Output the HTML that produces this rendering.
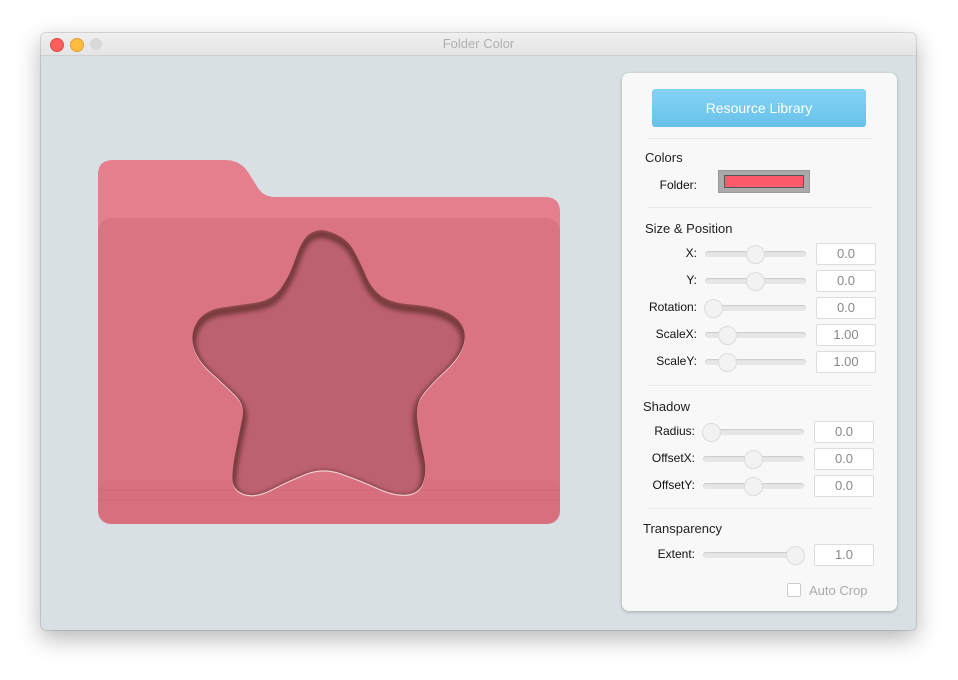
<!DOCTYPE html><html><head><style>
body{margin:0;width:958px;height:680px;background:#fff;font-family:"Liberation Sans",sans-serif;position:relative;overflow:hidden}
.a{position:absolute}
.win{left:41px;top:33px;width:875px;height:597px;border-radius:5px;box-shadow:0 8px 24px rgba(0,0,0,.3),0 0 0 1px rgba(0,0,0,.12);background:#d8e0e3;overflow:hidden}
.tb{left:0;top:0;width:875px;height:22px;background:linear-gradient(#f0f0f0,#e4e4e4);border-bottom:1px solid #cfcfcf;text-align:center;font-size:13px;color:#b0b0b0;line-height:22px}
.dot{top:5px;width:12px;height:12px;border-radius:50%}
.panel{left:622px;top:73px;width:275px;height:538px;background:#f8f8f8;border-radius:7px;box-shadow:0 1px 3px rgba(0,0,0,.25)}
.h{font-size:13px;color:#222}
.l{font-size:12px;color:#111;text-align:right;width:80px}
.tr{height:6px;border-radius:3px;background:#e6e6e6;box-shadow:inset 0 1px 1px rgba(0,0,0,.12)}
.th{width:17px;height:17px;border-radius:50%;background:#f2f2f2;box-shadow:0 0 0 1px #dcdcdc,0 1px 1px rgba(0,0,0,.1)}
.f{width:58px;height:20px;border:1px solid #ddd;background:#fff;border-radius:2px;font-size:13px;color:#888;text-align:center;line-height:20px}
.sep{height:1px;background:#e8e8e8;left:648px;width:224px}
</style></head><body>
<div class="a win">
<div class="a tb">Folder Color</div>
<div class="a dot" style="left:9px;background:#fc605c;border:0.5px solid #de4a45"></div>
<div class="a dot" style="left:29px;background:#fdbc40;border:0.5px solid #dea033"></div>
<div class="a dot" style="left:49px;background:#d8d8d8"></div>
</div>
<svg class="a" style="left:0;top:0" width="958" height="680">
<defs>
<path id="st" d="M336.5 234.5 Q348 240 354 251 Q360 262 366 276 Q372 290 382 296.5 Q392 303 411 304.5 Q430 306 442.5 310.5 Q455 315 461 324 Q467 333 463.5 345 Q460 357 445 371 Q430 385 422.5 395 Q415 405 417.5 422.5 Q420 440 423.5 455 Q427 470 423.5 481.5 Q420 493 407.5 494.5 Q395 496 377.5 488 Q360 480 341.5 473.5 Q323 467 306.5 473.5 Q290 480 272.5 489 Q255 498 244 494 Q233 490 232.5 480 Q232 470 236 450 Q240 430 242.5 417.5 Q245 405 235 395 Q225 385 211 372.5 Q197 360 193.5 346.5 Q190 333 197.5 321.5 Q205 310 222.5 307.5 Q240 305 256.5 302.5 Q273 300 281.5 287.5 Q290 275 295 260 Q300 245 305 238.5 Q310 232 317.5 230.5 Q325 229 336.5 234.5 Z"/>
<clipPath id="cp"><use href="#st"/></clipPath>
<filter id="bl"><feGaussianBlur stdDeviation="2"/></filter>
</defs>
<path d="M98 175 Q98 160 113 160 L225 160 Q240 160 248 172 L258 188 Q264 197 275 197 L545 197 Q560 197 560 212 L560 300 L98 300 Z" fill="#e57f8e"/>
<rect x="98" y="218" width="462" height="306" rx="14" fill="#da7382"/>
<rect x="98" y="480" width="462" height="44" rx="12" fill="#d56c7b" opacity=".6"/>
<line x1="98" y1="490" x2="560" y2="490" stroke="#cf6676" opacity=".6"/>
<line x1="98" y1="500" x2="560" y2="500" stroke="#cf6676" opacity=".6"/>
<use href="#st" fill="#f4d0d4" transform="translate(0,1.2)"/>
<use href="#st" fill="#bc6170"/>
<g clip-path="url(#cp)"><use href="#st" fill="none" stroke="#5a2a26" stroke-width="8" transform="translate(0,4)" opacity=".7" filter="url(#bl)"/></g>
</svg>
<div class="a panel"></div>
<div class="a" style="left:652px;top:89px;width:214px;height:38px;border-radius:3px;background:linear-gradient(#85d3f5,#68c1ea);color:#fff;font-size:14px;text-align:center;line-height:38px">Resource Library</div>
<div class="a sep" style="top:138px"></div>
<div class="a h" style="left:645px;top:150px">Colors</div>
<div class="a l" style="left:617px;top:178px">Folder:</div>
<div class="a" style="left:718px;top:170px;width:90px;height:21px;background:#aaa;border:1px solid #999"><div class="a" style="left:5px;top:4px;width:78px;height:11px;background:#fd5a6b;border:1px solid #555"></div></div>
<div class="a sep" style="top:207px"></div>
<div class="a h" style="left:645px;top:221px">Size &amp; Position</div>
<div class="a sep" style="top:385px"></div>
<div class="a h" style="left:643px;top:399px">Shadow</div>
<div class="a sep" style="top:508px"></div>
<div class="a h" style="left:643px;top:521px">Transparency</div>
<div id="rows"></div>
<div class="a" style="left:787px;top:583px;width:12px;height:12px;border:1px solid #ccc;border-radius:2px;background:#fff"></div>
<div class="a" style="left:809px;top:583px;font-size:13px;color:#aaa">Auto Crop</div>
<script>
var R=[["X:",254,705,816,.5,"0.0"],["Y:",281,705,816,.5,"0.0"],["Rotation:",308,705,816,0,"0.0"],["ScaleX:",335,705,816,.17,"1.00"],["ScaleY:",362,705,816,.17,"1.00"],["Radius:",432,703,814,0,"0.0"],["OffsetX:",459,703,814,.5,"0.0"],["OffsetY:",486,703,814,.5,"0.0"],["Extent:",555,703,814,1,"1.0"]];
var h="";R.forEach(function(r){var y=r[1];h+='<div class="a l" style="left:'+(r[2]-88)+'px;top:'+(y-8)+'px">'+r[0]+'</div><div class="a tr" style="left:'+r[2]+'px;top:'+(y-3)+'px;width:101px"></div><div class="a th" style="left:'+(r[2]+r[4]*84)+'px;top:'+(y-8)+'px"></div><div class="a f" style="left:'+r[3]+'px;top:'+(y-11)+'px">'+r[5]+'</div>'});
document.getElementById("rows").innerHTML=h;
</script>
</body></html>
